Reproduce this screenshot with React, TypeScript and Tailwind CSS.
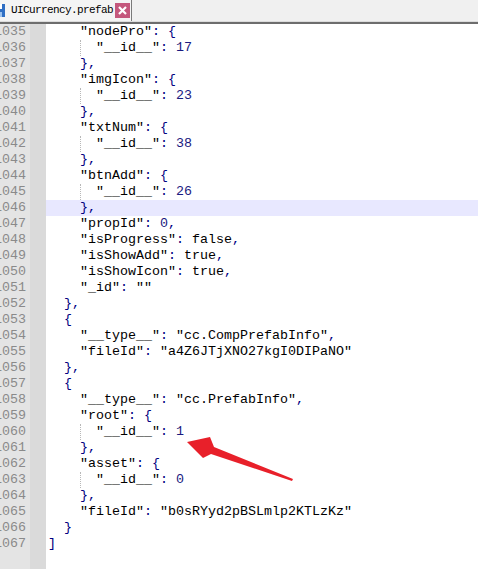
const lines: [number, string][] = [
  [4, '"nodePro": {'],
  [6, '"__id__": 17'],
  [4, '},'],
  [4, '"imgIcon": {'],
  [6, '"__id__": 23'],
  [4, '},'],
  [4, '"txtNum": {'],
  [6, '"__id__": 38'],
  [4, '},'],
  [4, '"btnAdd": {'],
  [6, '"__id__": 26'],
  [4, '},'],
  [4, '"propId": 0,'],
  [4, '"isProgress": false,'],
  [4, '"isShowAdd": true,'],
  [4, '"isShowIcon": true,'],
  [4, '"_id": ""'],
  [2, '},'],
  [2, '{'],
  [4, '"__type__": "cc.CompPrefabInfo",'],
  [4, '"fileId": "a4Z6JTjXNO27kgI0DIPaNO"'],
  [2, '},'],
  [2, '{'],
  [4, '"__type__": "cc.PrefabInfo",'],
  [4, '"root": {'],
  [6, '"__id__": 1'],
  [4, '},'],
  [4, '"asset": {'],
  [6, '"__id__": 0'],
  [4, '},'],
  [4, '"fileId": "b0sRYyd2pBSLmlp2KTLzKz"'],
  [2, '}'],
  [0, ']'],
];

// rough json colouring: strings black, punctuation + numbers navy
function Code({ text }: { text: string }) {
  const parts = text.match(/"[^"]*"|[{}\[\],:]|\d+|[a-z]+|\s+/g) ?? [];
  return (
    <>
      {parts.map((p, i) => {
        let cls = 'text-[#000000]';
        if (/^[{}\[\],:]$/.test(p)) cls = 'text-[#000080]';
        else if (/^\d+$/.test(p)) cls = 'text-[#1a1a80]';
        return (
          <span key={i} className={cls}>
            {p}
          </span>
        );
      })}
    </>
  );
}

function Floppy() {
  return (
    <svg width="16" height="16" viewBox="0 0 16 16" className="shrink-0">
      <rect x="1" y="2" width="14" height="13" fill="#2f6fc4" />
      <rect x="4" y="2" width="8" height="5" fill="#ffffff" />
      <rect x="4" y="10" width="8" height="5" fill="#9cc2ee" />
    </svg>
  );
}

export default function App() {
  return (
    <div className="w-[478px] h-[569px] flex flex-col overflow-hidden bg-white font-['Liberation_Mono',monospace] relative">
      {/* Tab bar */}
      <div className="h-[21px] bg-[#f0f0f0] flex items-stretch shrink-0">
        <div className="w-[132px] bg-[#f4f4f4] border-r border-[#7a7a7a] flex items-center">
          <div className="ml-[-10px] mt-[-1px]">
            <Floppy />
          </div>
          <span className="ml-[5px] text-[11px] tracking-[-0.6px] text-black leading-none">UICurrency.prefab</span>
          <div className="ml-[2px] w-[15px] h-[15px] bg-[#c4577c] flex items-center justify-center">
            <svg width="11" height="11" viewBox="0 0 11 11">
              <path d="M2 2 L9 9 M9 2 L2 9" stroke="#ffffff" strokeWidth="2.2" />
            </svg>
          </div>
        </div>
      </div>
      <div className="h-px bg-[#dcdcdc] shrink-0" />
      <div className="h-[2px] bg-[#6d6d6d] shrink-0" />

      {/* Editor */}
      <div className="flex-1 flex flex-col text-[13.33px] leading-[16px]">
        {lines.map(([indent, text], i) => {
          const active = i === 11;
          return (
            <div key={i} className="flex h-[16px] shrink-0">
              <div className="w-[30px] bg-[#e4e4e4] flex justify-end pr-[4px] overflow-hidden shrink-0">
                <span className="whitespace-nowrap shrink-0 text-[#8a8a8a]">{1035 + i}</span>
              </div>
              <div className="w-[16px] bg-[#dadada] shrink-0" />
              <div className={`flex-1 pl-[2px] whitespace-pre ${active ? 'bg-[#e8e8ff]' : ''}`}>
                {indent === 6 ? (
                  <>
                    <span className="inline-block w-[32px] h-[16px] align-top" />
                    <span className="inline-block w-[16px] h-[16px] align-top border-l border-dotted border-[#b8b8b8]" />
                  </>
                ) : (
                  <span>{' '.repeat(indent)}</span>
                )}
                <Code text={text} />
              </div>
            </div>
          );
        })}
        <div className="flex flex-1">
          <div className="w-[30px] bg-[#e4e4e4]" />
          <div className="w-[16px] bg-[#dadada]" />
          <div className="flex-1" />
        </div>
      </div>

      {/* annotation arrow */}
      <svg className="absolute left-0 top-0 pointer-events-none" width="478" height="569">
        <polygon
          points="187,442 210,437 214,447 293,479 292,481 211,454 203,458"
          fill="#e8202a"
        />
      </svg>
    </div>
  );
}
